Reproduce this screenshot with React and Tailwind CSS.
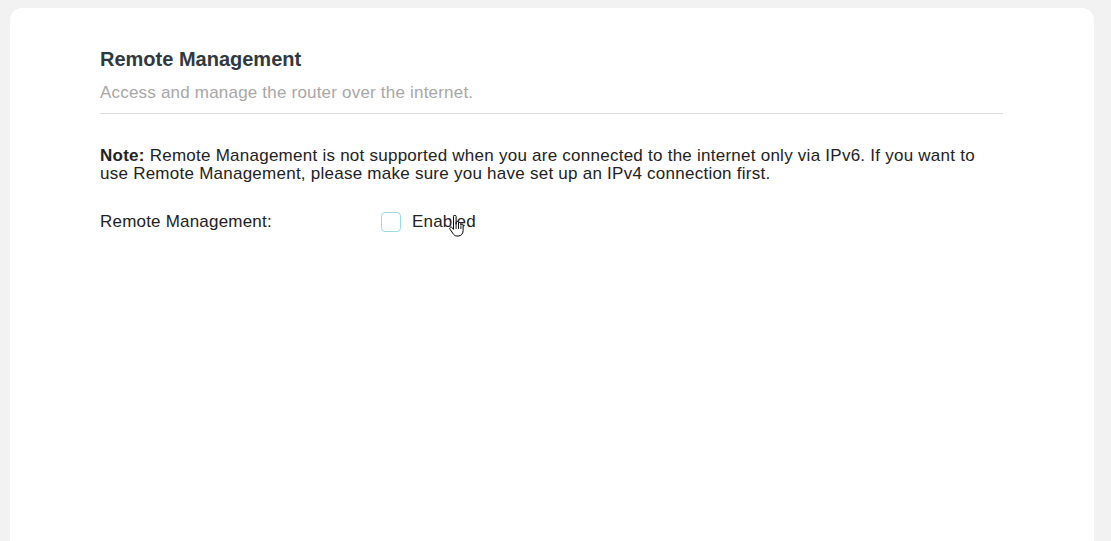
export default function App() {
  return (
    <div className="h-[541px] w-[1111px] overflow-hidden bg-[#f2f2f2] pl-[10px] pr-[17px] pt-[8px] font-['Liberation_Sans',Arial,sans-serif]">
      <div className="h-full rounded-t-[12px] bg-white pl-[90px] pr-[91px] pt-[39px]">
        {/* Header */}
        <h2 className="text-[20px] font-bold leading-[24px] text-[#2f3a3f]">Remote Management</h2>
        <p className="mt-[12px] text-[17px] leading-[20px] tracking-[0.2px] text-[#a7a7a7]">
          Access and manage the router over the internet.
        </p>
        <div className="mt-[10px] h-px bg-[#dcdcdc]" />

        {/* Note */}
        <p className="mt-[33px] text-[17px] leading-[18px] tracking-[0.25px] text-[#222]">
          <span className="font-bold">Note:</span> Remote Management is not supported when you are connected to the
          internet only via IPv6. If you want to use Remote Management, please make sure you have set up an IPv4
          connection first.
        </p>

        {/* Setting row */}
        <div className="mt-[29px] flex items-center">
          <span className="w-[281px] text-[17px] leading-[20px] tracking-[0.2px] text-[#222]">Remote Management:</span>
          <label className="relative flex items-center">
            <span className="h-[20px] w-[20px] rounded-[4px] border border-[#9adbe6] bg-white" />
            <span className="ml-[11px] text-[17px] leading-[20px] tracking-[0.2px] text-[#222]">Enabled</span>
            <svg
              className="absolute left-[68px] top-[3px]"
              width="16"
              height="24"
              viewBox="0 0 16 24"
            >
              <path
                d="M4.5 1.5c0-.8.6-1.3 1.3-1.3s1.3.5 1.3 1.3v8.2V7.6c0-.7.6-1.2 1.2-1.2s1.2.5 1.2 1.2v2.3-1.2c0-.7.6-1.2 1.2-1.2s1.2.5 1.2 1.2v1.4c0-.6.5-1.100 1.1-1.1s1.1.5 1.1 1.1v5.5c0 3-1.8 5.4-4.8 5.4H8c-2 0-3-1-4.2-2.7L1 14.2c-.5-.7-.3-1.5.3-1.9.6-.4 1.4-.2 1.9.4l1.3 1.7V1.5z"
                fill="white"
                stroke="black"
                strokeWidth="1"
                strokeLinejoin="round"
              />
              <path d="M7.1 10v4M9.5 10v4M11.9 10.5v3.5" stroke="black" strokeWidth="0.9" />
            </svg>
          </label>
        </div>
      </div>
    </div>
  );
}
